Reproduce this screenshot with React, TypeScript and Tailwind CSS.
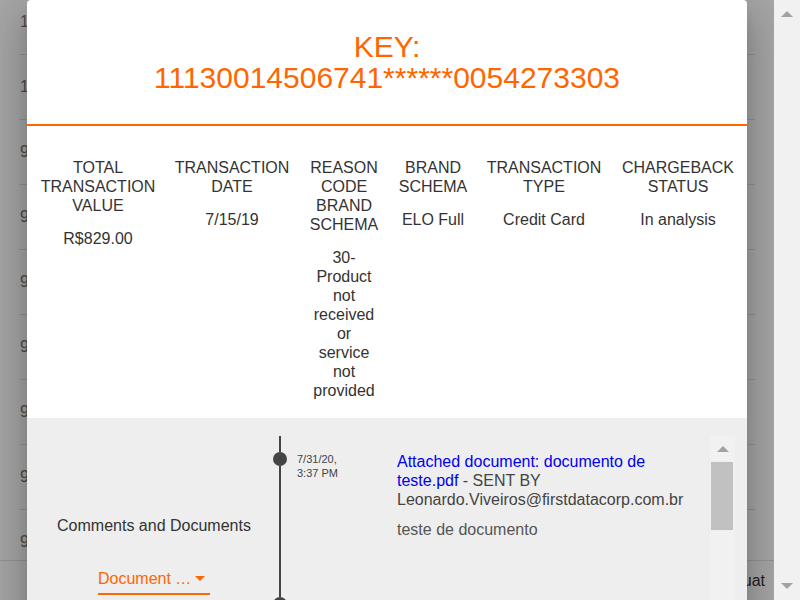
import React from 'react';

const bgRows = [
  '11130014506741',
  '11130014506741',
  '98730012204512',
  '98730012204512',
  '98730012204512',
  '98730012204512',
  '98730012204512',
  '98730012204512',
  '98730012204512',
];

const columns = [
  { title: 'TOTAL TRANSACTION VALUE', value: 'R$829.00', cell: 'w-[134px]', inner: 'w-[120px]' },
  { title: 'TRANSACTION DATE', value: '7/15/19', cell: 'w-[134px]', inner: 'w-[120px]' },
  {
    title: 'REASON CODE BRAND SCHEMA',
    value: '30-Product not received or service not provided',
    cell: 'w-[90px]',
    inner: 'w-[69px]',
  },
  { title: 'BRAND SCHEMA', value: 'ELO Full', cell: 'w-[88px]', inner: 'w-[74px]' },
  { title: 'TRANSACTION TYPE', value: 'Credit Card', cell: 'w-[134px]', inner: 'w-[120px]' },
  { title: 'CHARGEBACK STATUS', value: 'In analysis', cell: 'w-[134px]', inner: 'w-[120px]' },
];

const entries = [
  {
    date: '7/31/20, 3:37 PM',
    link: 'Attached document: documento de teste.pdf',
    by: 'Leonardo.Viveiros@firstdatacorp.com.br',
    comment: 'teste de documento',
  },
  {
    date: '7/31/20, 3:36 PM',
    link: 'Attached document: teste.pdf',
    by: 'Leonardo.Viveiros@firstdatacorp.com.br',
    comment: 'teste',
  },
];

function Caret({ dir }: { dir: 'up' | 'down' }) {
  return (
    <svg width="12" height="6" viewBox="0 0 12 6" className="block">
      <polygon points={dir === 'up' ? '6,0 12,6 0,6' : '0,0 12,0 6,6'} fill="#a3a3a3" />
    </svg>
  );
}

function TimelineEntry({ entry }: { entry: (typeof entries)[number] }) {
  return (
    <div className="flex h-[145px]">
      {/* rail */}
      <div className="flex w-[14px] flex-none flex-col items-center">
        <div className="h-[16px] w-[2px] bg-[#444]" />
        <div className="h-[14px] w-[14px] rounded-full bg-[#444]" />
        <div className="w-[2px] flex-1 bg-[#444]" />
      </div>
      <div className="ml-[10px] w-[60px] flex-none pt-[16px] text-[11px] leading-[14px] text-[#444]">
        {entry.date}
      </div>
      <div className="ml-[40px] w-[300px] flex-none pt-[16px] text-[16px] leading-[19px] text-[#444]">
        <p>
          <span className="text-[#0000ee]">{entry.link}</span> - SENT BY {entry.by}
        </p>
        <p className="mt-[11px] text-[#555]">{entry.comment}</p>
      </div>
    </div>
  );
}

function ChargebackModal() {
  return (
    <div className="absolute left-[27px] top-0 w-[720px] rounded-t-[4px] bg-white shadow-[0_11px_15px_-7px_rgba(0,0,0,0.2),0_24px_38px_3px_rgba(0,0,0,0.14),0_9px_46px_8px_rgba(0,0,0,0.12)]">
      {/* title */}
      <div className="border-b-2 border-[#ff6600] pt-[31px] pb-[31px] text-center text-[30px] leading-[31px] text-[#ff6600]">
        <div>KEY:</div>
        <div>11130014506741******0054273303</div>
      </div>

      {/* summary columns */}
      <div className="flex pl-[4px] pt-[32px] pb-[18px] text-[16px] leading-[19px] text-[#333]">
        {columns.map((c) => (
          <div key={c.title} className={`${c.cell} flex-none text-center`}>
            <div className={`${c.inner} mx-auto`}>
              <div>{c.title}</div>
              <div className="mt-[14px]">{c.value}</div>
            </div>
          </div>
        ))}
      </div>

      {/* comments and documents */}
      <div className="flex h-[400px] bg-[#eeeeee]">
        <div className="w-[246px] flex-none pl-[8px] pt-[98px] text-center text-[16px] leading-[19px] text-[#333]">
          <div>Comments and Documents</div>
          <div className="mx-auto mt-[34px] flex w-[112px] items-center justify-between border-b-2 border-[#ff6600] pb-[5px] text-[#ff6600]">
            <span>Document …</span>
            <svg width="10" height="5" viewBox="0 0 10 5" className="mr-[5px] block">
              <polygon points="0,0 10,0 5,5" fill="#ff6600" />
            </svg>
          </div>
        </div>

        <div className="mt-[18px] mr-[12px] flex h-[300px] flex-1 overflow-hidden">
          <div className="flex-1">
            {entries.map((e, i) => (
              <TimelineEntry key={i} entry={e} />
            ))}
          </div>
          <div className="flex w-[25px] flex-none flex-col bg-[#f1f1f1]">
            <div className="flex h-[26px] items-center justify-center">
              <Caret dir="up" />
            </div>
            <div className="ml-[1px] h-[68px] w-[22px] bg-[#c1c1c1]" />
          </div>
        </div>
      </div>
    </div>
  );
}

export default function App() {
  return (
    <div className="flex h-[600px] w-[800px] overflow-hidden bg-white font-['Liberation_Sans',Arial,sans-serif]">
      <div className="relative flex h-full flex-1 flex-col overflow-hidden">
        {/* page behind the dialog */}
        <div className="flex-1 overflow-hidden px-[19px]">
          <div className="-mt-[10px]">
            {bgRows.map((r, i) => (
              <div
                key={i}
                className="flex h-[65px] items-center border-b border-[#e0e0e0] pl-[1px] text-[16px] text-[#757575]"
              >
                {r}
              </div>
            ))}
          </div>
        </div>
        <div className="flex h-[40px] flex-none items-center justify-end border-t border-[#e0e0e0] pr-[9px] text-[16px] text-[#333]">
          Situat
        </div>

        <div className="absolute inset-0 bg-black/35" />
        <ChargebackModal />
      </div>

      {/* page scrollbar */}
      <div className="flex h-full w-[26px] flex-none flex-col items-center justify-between bg-[#f1f1f1] py-[11px]">
        <Caret dir="up" />
        <Caret dir="down" />
      </div>
    </div>
  );
}
